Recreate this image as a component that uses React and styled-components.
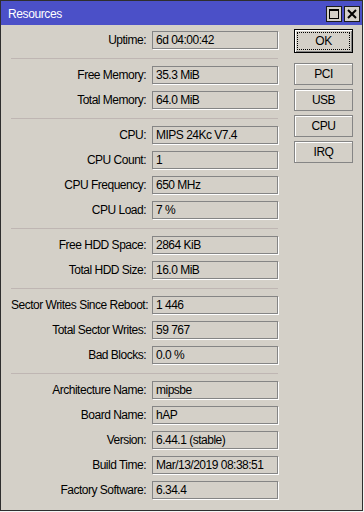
import React from 'react'
import styled, {createGlobalStyle} from 'styled-components'

const GlobalStyle = createGlobalStyle`
  html, body {
    margin: 0;
    padding: 0;
    background: #f4f4f4;
  }
  body {
    font-family: "Liberation Sans", Arial, sans-serif;
    font-size: 12px;
    letter-spacing: -0.5px;
    color: #000;
  }
`

const Window = styled.div`
  width: 363px;
  height: 511px;
  box-sizing: border-box;
  border: 1px solid #2e2e2e;
  background: #d4d0c8;
  display: flex;
  flex-direction: column;
`

const TitleBar = styled.div`
  height: 24px;
  flex: none;
  background: #4b50c8;
  display: flex;
  align-items: center;
  padding: 0 2px 0 7px;
`

const Title = styled.span`
  flex: 1;
  color: #fff;
  font-size: 12px;
  letter-spacing: -0.4px;
  padding-top: 2px;
`

const TitleButtons = styled.div`
  display: flex;
  gap: 2px;
  margin-top: 2px;
`

const TitleButton = styled.div`
  width: 16px;
  height: 16px;
  box-sizing: border-box;
  border: 1px solid #1c1c1c;
  background: #d4d0c8;
  display: flex;
  align-items: center;
  justify-content: center;
`

const Body = styled.div`
  display: flex;
  align-items: flex-start;
  padding: 4px 0 0 10px;
`

const Fields = styled.div`
  width: 267px;
  padding-top: 2px;
  display: flex;
  flex-direction: column;
`

const Row = styled.div`
  display: grid;
  grid-template-columns: 135px 126px;
  column-gap: 6px;
  align-items: center;
  margin-bottom: 7px;
`

const Label = styled.span`
  text-align: right;
  white-space: nowrap;
`

const Value = styled.div`
  height: 18px;
  box-sizing: border-box;
  border: 1px solid #858585;
  box-shadow: 1px 1px 0 #fff;
  padding: 0 3px;
  display: flex;
  align-items: center;
  white-space: nowrap;
`

const Separator = styled.div`
  height: 1px;
  background: #bfb6b3;
  margin: 2px 0 7px;
`

const Actions = styled.div`
  width: 59px;
  margin-left: 16px;
  display: flex;
  flex-direction: column;
  gap: 4px;
`

const Button = styled.div`
  height: ${p => (p.$default ? '24px' : '22px')};
  box-sizing: border-box;
  border: 1px solid ${p => (p.$default ? '#000' : '#858585')};
  box-shadow: inset 1px 1px 0 #fff${p => (p.$default ? ', inset -1px -1px 0 #858585' : '')};
  display: flex;
  align-items: center;
  justify-content: center;
  outline: ${p => (p.$default ? '1px dotted #000' : 'none')};
  outline-offset: -4px;
  margin-bottom: ${p => (p.$default ? '6px' : '0')};
`

const sections = [
  [['Uptime', '6d 04:00:42']],
  [
    ['Free Memory', '35.3 MiB'],
    ['Total Memory', '64.0 MiB'],
  ],
  [
    ['CPU', 'MIPS 24Kc V7.4'],
    ['CPU Count', '1'],
    ['CPU Frequency', '650 MHz'],
    ['CPU Load', '7 %'],
  ],
  [
    ['Free HDD Space', '2864 KiB'],
    ['Total HDD Size', '16.0 MiB'],
  ],
  [
    ['Sector Writes Since Reboot', '1 446'],
    ['Total Sector Writes', '59 767'],
    ['Bad Blocks', '0.0 %'],
  ],
  [
    ['Architecture Name', 'mipsbe'],
    ['Board Name', 'hAP'],
    ['Version', '6.44.1 (stable)'],
    ['Build Time', 'Mar/13/2019 08:38:51'],
    ['Factory Software', '6.34.4'],
  ],
]

function MaximizeIcon() {
  return (
    <svg width="10" height="10" viewBox="0 0 10 10">
      <rect x="0.5" y="0.5" width="9" height="9" fill="none" stroke="#000" />
      <rect x="0" y="0" width="10" height="2" fill="#000" />
    </svg>
  )
}

function CloseIcon() {
  return (
    <svg width="10" height="10" viewBox="0 0 10 10">
      <path d="M1 1 L9 9 M9 1 L1 9" stroke="#000" strokeWidth="2" />
    </svg>
  )
}

export default function App() {
  return (
    <>
      <GlobalStyle />
      <Window>
        <TitleBar>
          <Title>Resources</Title>
          <TitleButtons>
            <TitleButton>
              <MaximizeIcon />
            </TitleButton>
            <TitleButton>
              <CloseIcon />
            </TitleButton>
          </TitleButtons>
        </TitleBar>
        <Body>
          <Fields>
            {sections.map((rows, i) => (
              <React.Fragment key={i}>
                {i > 0 && <Separator />}
                {rows.map(([label, value]) => (
                  <Row key={label}>
                    <Label>{label}:</Label>
                    <Value>{value}</Value>
                  </Row>
                ))}
              </React.Fragment>
            ))}
          </Fields>
          <Actions>
            <Button $default>OK</Button>
            {['PCI', 'USB', 'CPU', 'IRQ'].map(each => (
              <Button key={each}>{each}</Button>
            ))}
          </Actions>
        </Body>
      </Window>
    </>
  )
}
